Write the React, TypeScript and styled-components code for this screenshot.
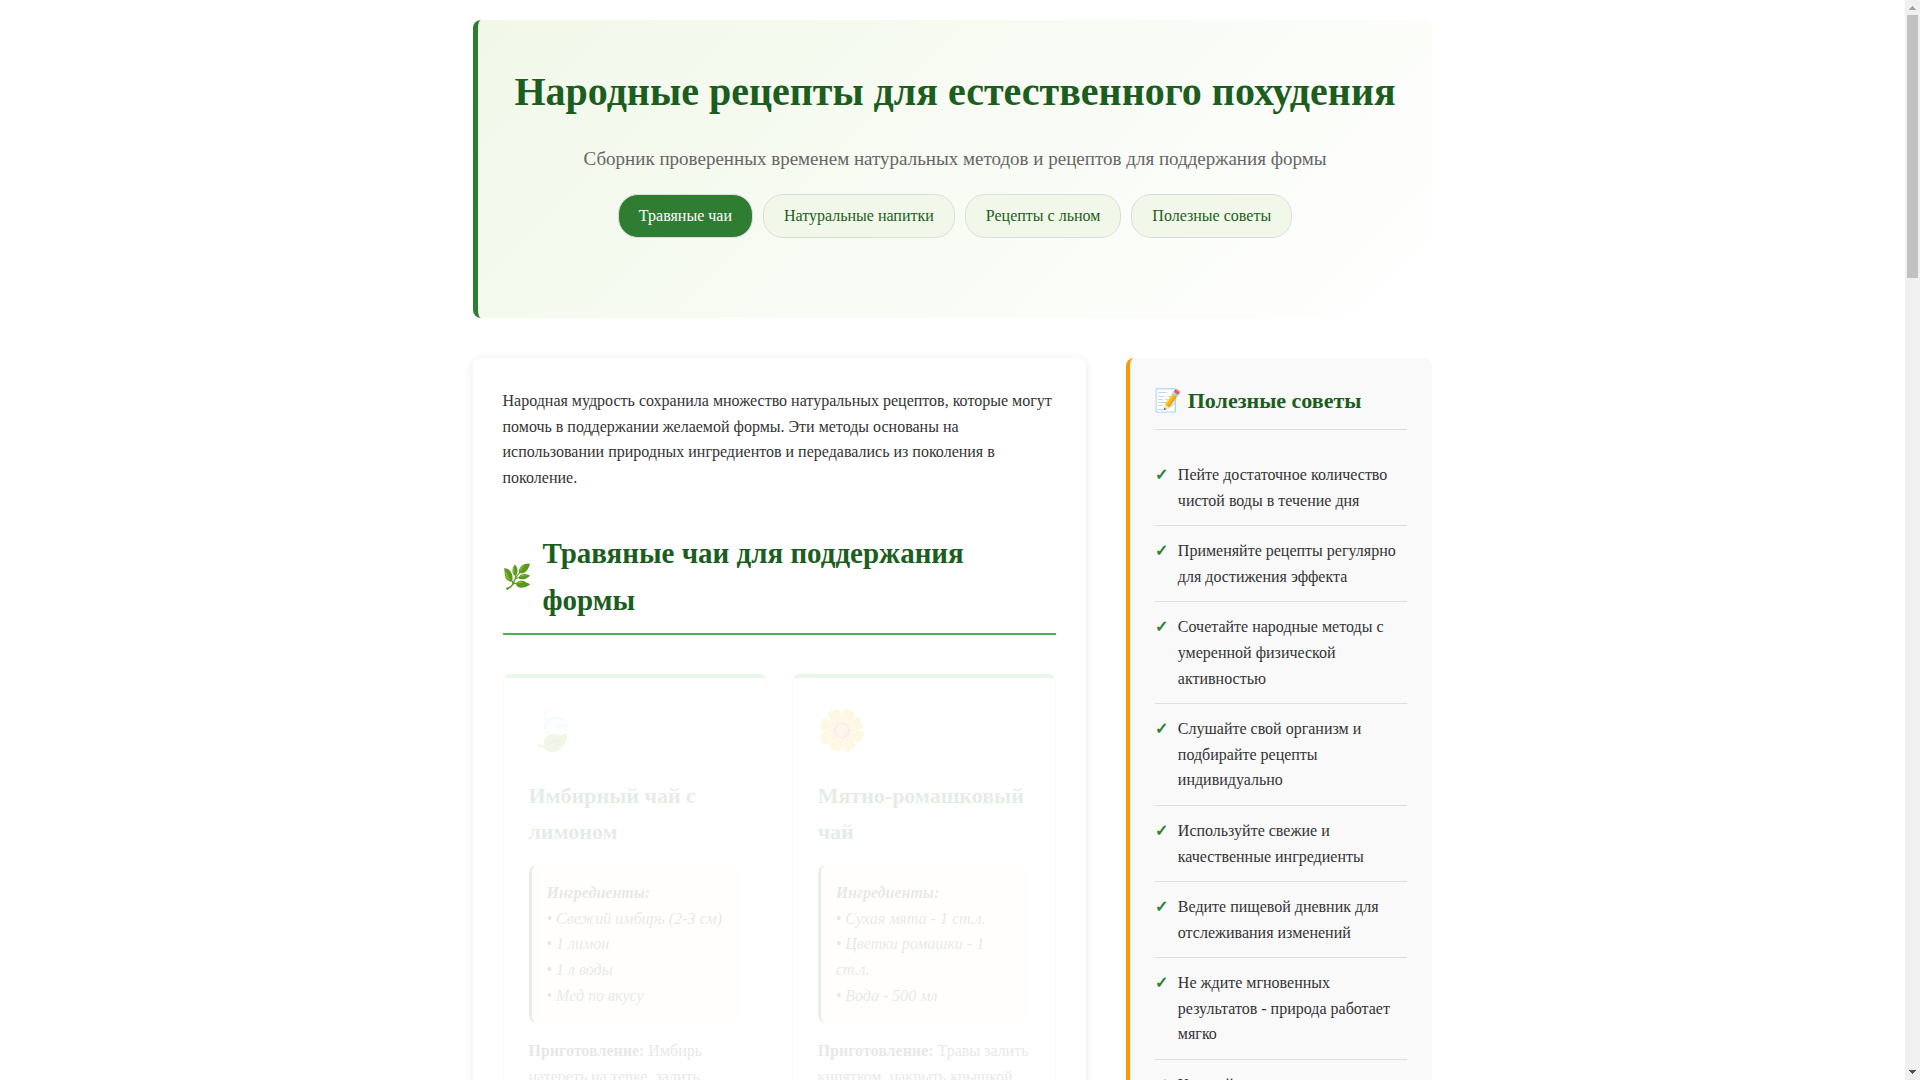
import React from "react";
import styled, { createGlobalStyle } from "styled-components";

const GlobalStyle = createGlobalStyle`
  * { box-sizing: border-box; margin: 0; padding: 0; }
  body {
    background: #fff;
    color: #333;
    font-family: "Liberation Serif", "Noto Color Emoji", serif;
    font-size: 16px;
    line-height: 1.6;
  }
`;

const Shell = styled.div`
  display: flex;
  height: 100vh;
  overflow: hidden;
`;

const Viewport = styled.div`
  flex: 1;
  overflow-y: auto;
  scrollbar-width: none;
`;

const Scrollbar = styled.div`
  display: flex;
  flex-direction: column;
  align-items: center;
  width: 15px;
  background: #f0f0f0;
`;

const ArrowBox = styled.svg`
  display: block;
  width: 15px;
  height: 15px;
`;

const Track = styled.div`
  flex: 1;
  width: 11px;
`;

const Thumb = styled.div`
  height: 25%;
  background: #c1c1c1;
`;

const Page = styled.div`
  display: flex;
  flex-direction: column;
  gap: 40px;
  max-width: 1000px;
  margin: 0 auto;
  padding: 20px;
`;

const Header = styled.header`
  padding: 40px 20px 80px;
  text-align: center;
  border-left: 5px solid #2e7d32;
  border-radius: 8px;
  background: linear-gradient(135deg, #f1f8e9 0%, #fff 100%);
`;

const Title = styled.h1`
  margin-bottom: 20px;
  color: #1b5e20;
  font-size: 40px;
`;

const Subtitle = styled.p`
  margin-bottom: 20px;
  color: #666;
  font-size: 19px;
`;

const Nav = styled.nav`
  display: flex;
  flex-wrap: wrap;
  justify-content: center;
  gap: 10px;
`;

const NavLink = styled.a<{ $active?: boolean }>`
  padding: 8px 20px;
  border: 1px solid #ddd;
  border-radius: 20px;
  background: ${(p) => (p.$active ? "#2e7d32" : "#f1f8e9")};
  color: ${(p) => (p.$active ? "#fff" : "#1b5e20")};
  text-decoration: none;
`;

const Columns = styled.div`
  display: grid;
  grid-template-columns: 2fr 1fr;
  gap: 40px;
`;

const Main = styled.main`
  padding: 30px;
  border-radius: 8px;
  background: #fff;
  box-shadow: 0 2px 10px rgba(0, 0, 0, 0.1);
`;

const SectionTitle = styled.h2`
  display: flex;
  align-items: center;
  gap: 10px;
  margin: 40px 0 38px;
  padding-bottom: 10px;
  border-bottom: 2px solid #4caf50;
  color: #1b5e20;
  font-size: 29px;
`;

const SectionIcon = styled.span`
  font-size: 24px;
`;

const Recipes = styled.div`
  display: grid;
  grid-template-columns: 1fr 1fr;
  gap: 25px;
`;

const Recipe = styled.article`
  min-height: 560px;
  padding: 25px;
  border: 1px solid #ddd;
  border-radius: 8px;
  background: linear-gradient(#4caf50, #4caf50) top / 100% 4px no-repeat #fff;
  opacity: 0.11;
`;

const RecipeIcon = styled.div`
  margin-bottom: 15px;
  font-size: 40px;
`;

const RecipeTitle = styled.h3`
  margin-bottom: 15px;
  color: #1b5e20;
  font-size: 22px;
  line-height: 36px;
`;

const Ingredients = styled.div`
  margin-bottom: 15px;
  padding: 15px;
  border-left: 3px solid #2e7d32;
  border-radius: 8px;
  background: #fffde7;
  font-style: italic;
`;

const Aside = styled.aside`
  padding: 25px;
  border-left: 4px solid #ff9800;
  border-radius: 8px;
  background: #f9f9f9;
`;

const AsideTitle = styled.h3`
  margin-bottom: 20px;
  padding-bottom: 10px;
  border-bottom: 1px solid #ddd;
  color: #1b5e20;
  font-size: 22px;
  line-height: 36px;
`;

const Tips = styled.ul`
  list-style: none;
`;

const Tip = styled.li`
  display: flex;
  gap: 10px;
  padding: 12px 0;
  border-bottom: 1px solid #ddd;

  &::before {
    content: "✓";
    color: #2e7d32;
    font-weight: bold;
  }
`;

const sections = [
  "Травяные чаи",
  "Натуральные напитки",
  "Рецепты с льном",
  "Полезные советы",
];

const recipes = [
  {
    icon: "🍃",
    title: "Имбирный чай с лимоном",
    ingredients: ["Свежий имбирь (2-3 см)", "1 лимон", "1 л воды", "Мед по вкусу"],
    method: "Имбирь натереть на терке, залить",
  },
  {
    icon: "🌼",
    title: "Мятно-ромашковый чай",
    ingredients: ["Сухая мята - 1 ст.л.", "Цветки ромашки - 1 ст.л.", "Вода - 500 мл"],
    method: "Травы залить кипятком, накрыть крышкой,",
  },
];

const tips = [
  "Пейте достаточное количество чистой воды в течение дня",
  "Применяйте рецепты регулярно для достижения эффекта",
  "Сочетайте народные методы с умеренной физической активностью",
  "Слушайте свой организм и подбирайте рецепты индивидуально",
  "Используйте свежие и качественные ингредиенты",
  "Ведите пищевой дневник для отслеживания изменений",
  "Не ждите мгновенных результатов - природа работает мягко",
  "Каждый",
];

export default function App() {
  return (
    <>
      <GlobalStyle />
      <Shell>
        <Viewport>
          <Page>
            <Header>
              <Title>Народные рецепты для естественного похудения</Title>
              <Subtitle>
                Сборник проверенных временем натуральных методов и рецептов для поддержания формы
              </Subtitle>
              <Nav>
                {sections.map((name, i) => (
                  <NavLink key={name} href={`#section-${i + 1}`} $active={i === 0}>
                    {name}
                  </NavLink>
                ))}
              </Nav>
            </Header>
            <Columns>
              <Main>
                <p>
                  Народная мудрость сохранила множество натуральных рецептов, которые могут помочь
                  в поддержании желаемой формы. Эти методы основаны на использовании природных
                  ингредиентов и передавались из поколения в поколение.
                </p>
                <section id="section-1">
                  <SectionTitle>
                    <SectionIcon>🌿</SectionIcon>
                    <span>Травяные чаи для поддержания формы</span>
                  </SectionTitle>
                  <Recipes>
                    {recipes.map((r) => (
                      <Recipe key={r.title}>
                        <RecipeIcon>{r.icon}</RecipeIcon>
                        <RecipeTitle>{r.title}</RecipeTitle>
                        <Ingredients>
                          <strong>Ингредиенты:</strong>
                          {r.ingredients.map((item) => (
                            <div key={item}>• {item}</div>
                          ))}
                        </Ingredients>
                        <p>
                          <strong>Приготовление:</strong> {r.method}
                        </p>
                      </Recipe>
                    ))}
                  </Recipes>
                </section>
              </Main>
              <Aside>
                <AsideTitle>📝 Полезные советы</AsideTitle>
                <Tips>
                  {tips.map((tip) => (
                    <Tip key={tip}>{tip}</Tip>
                  ))}
                </Tips>
              </Aside>
            </Columns>
          </Page>
        </Viewport>
        <Scrollbar aria-hidden="true">
          <ArrowBox viewBox="0 0 15 15" shapeRendering="crispEdges">
            <path d="M4 10h7v-1h-1v-1h-1v-1h-1v-1h-1v1h-1v1h-1v1h-1z" fill="#a3a3a3" />
          </ArrowBox>
          <Track>
            <Thumb />
          </Track>
          <ArrowBox viewBox="0 0 15 15" shapeRendering="crispEdges">
            <path d="M4 5h7v1h-1v1h-1v1h-1v1h-1v-1h-1v-1h-1v-1h-1z" fill="#505050" />
          </ArrowBox>
        </Scrollbar>
      </Shell>
    </>
  );
}
